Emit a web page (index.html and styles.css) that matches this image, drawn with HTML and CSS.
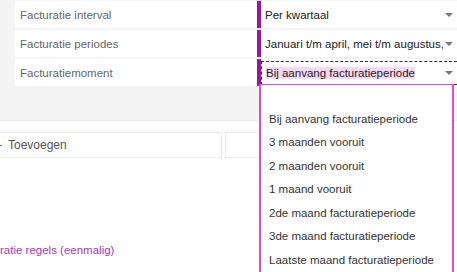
FILE: index.html
```html
<!DOCTYPE html>
<html>
<head>
<meta charset="utf-8">
<link rel="stylesheet" href="styles.css">
</head>
<body>
<div class="top">
  <div class="form">
    <div class="label">Facturatie interval</div>
    <div class="value"><span class="val-text">Per kwartaal</span><span class="arrow"></span></div>
    <div class="label">Facturatie periodes</div>
    <div class="value"><span class="val-text">Januari t/m april, mei t/m augustus,</span><span class="arrow"></span></div>
    <div class="label">Facturatiemoment</div>
    <div class="value focused"><div class="focus-box"><span class="val-text"><span class="hl">Bij aanvang facturatieperiode</span></span><span class="arrow"></span></div></div>
  </div>
</div>
<div class="bottom">
  <div class="btn-row">
    <div class="btn add"><svg class="plus" width="7" height="7" viewBox="0 0 7 7"><path d="M3.5 0V7M0 3.5H7" stroke="#777" stroke-width="1.2"/></svg><span>Toevoegen</span></div>
    <div class="btn second"></div>
  </div>
  <div class="link">ratie regels (eenmalig)</div>
</div>
<ul class="dropdown">
  <li class="blank"></li>
  <li>Bij aanvang facturatieperiode</li>
  <li>3 maanden vooruit</li>
  <li>2 maanden vooruit</li>
  <li>1 maand vooruit</li>
  <li>2de maand facturatieperiode</li>
  <li>3de maand facturatieperiode</li>
  <li>Laatste maand facturatieperiode</li>
</ul>
</body>
</html>
```
FILE: styles.css
```css
* { box-sizing: border-box; }
html, body { margin: 0; padding: 0; }
body {
  width: 457px;
  height: 272px;
  overflow: hidden;
  position: relative;
  font-family: "Liberation Sans", Arial, sans-serif;
  font-size: 11.5px;
  background: #fff;
}
.top {
  background: #f4f4f4;
  height: 121px;
  padding: 1px 0 0 15px;
  border-bottom: 1px solid #ececec;
}
.form {
  display: grid;
  grid-template-columns: 242px 1fr;
  grid-auto-rows: 27px;
  row-gap: 2px;
}
.label {
  background: #fff;
  color: #666;
  display: flex;
  align-items: center;
  padding: 1px 0 0 5px;
}
.value {
  background: #fff;
  border-left: 4px solid #9b169b;
  display: flex;
  align-items: center;
  color: #222;
  overflow: hidden;
  padding-top: 1px;
}
.val-text {
  flex: 1;
  padding-left: 4px;
  white-space: nowrap;
  overflow: hidden;
}
.arrow {
  width: 0;
  height: 0;
  border-left: 4px solid transparent;
  border-right: 4px solid transparent;
  border-top: 4px solid #777;
  margin: 0 4px 0 2px;
  flex: none;
}
.value.focused {
  padding: 2px 0 1px 0;
  align-items: stretch;
}
.focus-box {
  flex: 1;
  border: 1px dashed #333;
  border-right: none;
  display: flex;
  align-items: center;
}
.focus-box .val-text { padding-left: 4px; }
.hl {
  background: #f8d8f4;
  text-decoration: underline wavy #e05050;
  text-decoration-thickness: 1px;
  text-underline-offset: 2px;
}
.bottom {
  padding-top: 11px;
}
.btn-row {
  display: flex;
  gap: 3px;
  margin-left: -20px;
}
.btn {
  height: 26px;
  border: 1px solid #ececec;
  background: #fff;
  display: flex;
  align-items: center;
  color: #555;
  font-size: 12px;
}
.add { width: 242px; padding-left: 14px; gap: 6px; }
.plus { flex: none; }
.second { width: 80px; }
.link {
  margin-top: 86px;
  color: #b036b5;
  font-size: 11.5px;
}
.dropdown {
  position: absolute;
  left: 259px;
  top: 84px;
  width: 195px;
  height: 200px;
  margin: 0;
  padding: 0 0 0 8px;
  list-style: none;
  background: #fff;
  border: 2px solid #d64fd6;
  border-top-width: 1px;
  color: #333;
}
.dropdown li {
  height: 23.5px;
  line-height: 23.5px;
  white-space: nowrap;
}
.dropdown li.blank { height: 22.5px; }
```
